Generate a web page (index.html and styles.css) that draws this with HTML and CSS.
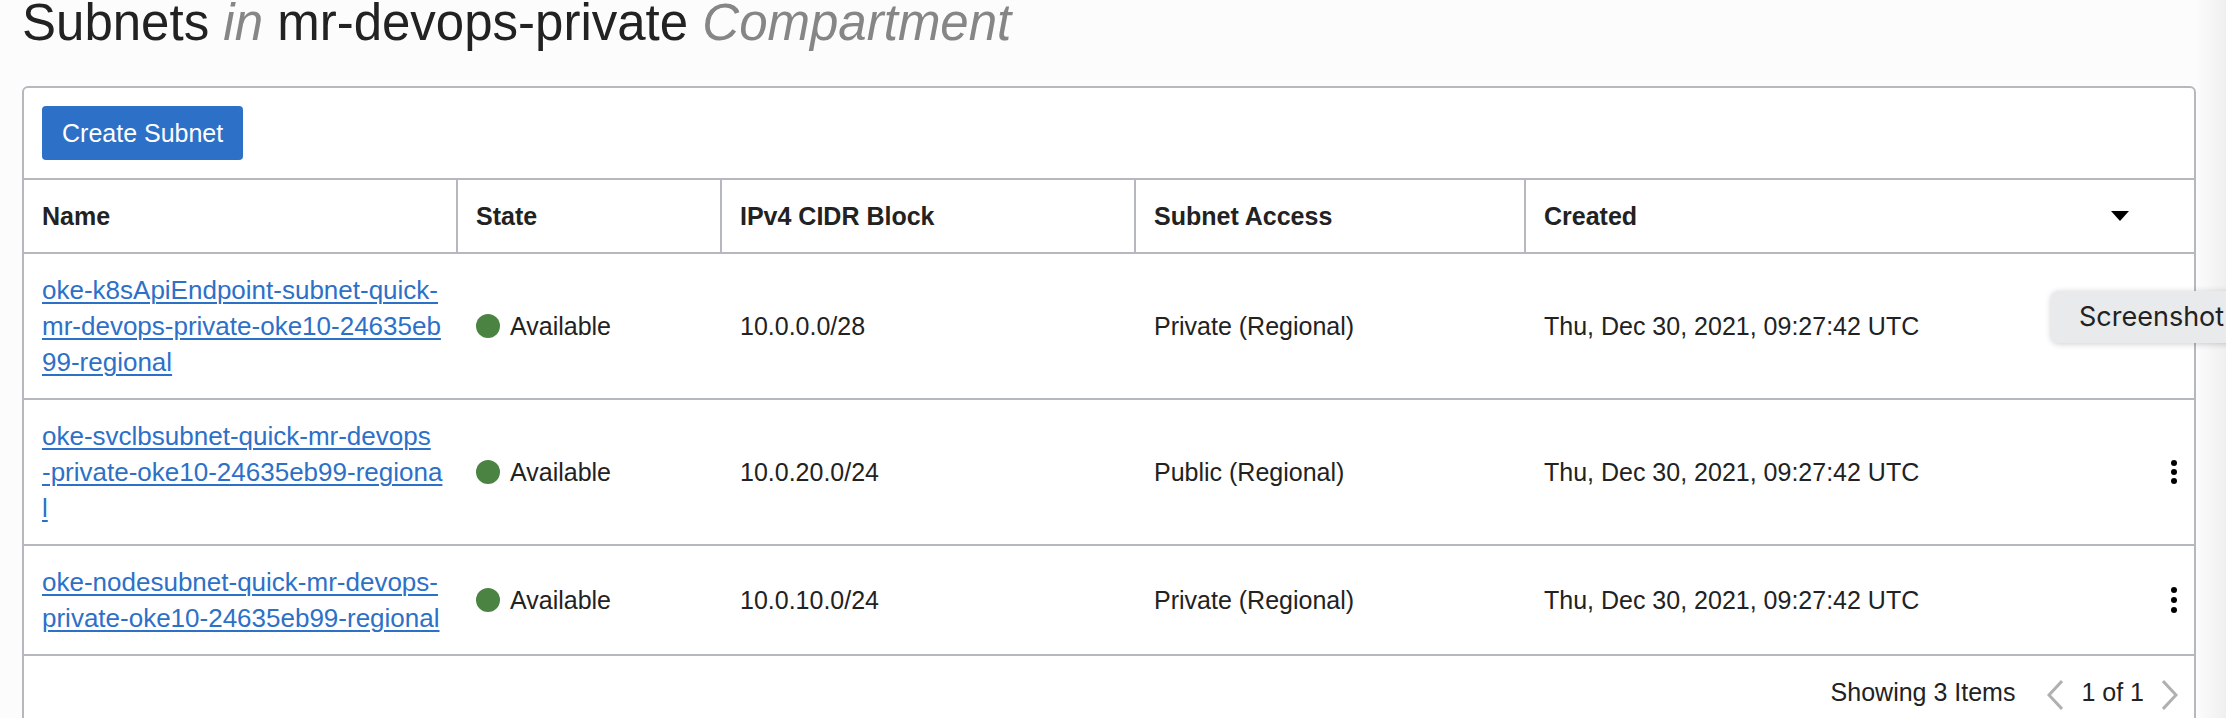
FILE: index.html
```html
<!DOCTYPE html>
<html lang="en">
<head>
<meta charset="utf-8">
<title>Subnets</title>
<link rel="stylesheet" href="styles.css">
</head>
<body>
<main class="page">
  <h1 class="title">Subnets <em>in</em> mr-devops-private <em>Compartment</em></h1>
  <section class="card">
    <div class="toolbar">
      <button class="primary" type="button">Create Subnet</button>
    </div>
    <table class="grid">
      <colgroup>
        <col class="col-name"><col class="col-state"><col class="col-cidr"><col class="col-access"><col><col class="col-actions">
      </colgroup>
      <thead>
        <tr>
          <th scope="col">Name</th>
          <th scope="col">State</th>
          <th scope="col">IPv4 CIDR Block</th>
          <th scope="col">Subnet Access</th>
          <th scope="col" aria-sort="descending"><span class="sortable">Created
            <svg class="caret" viewBox="0 0 18 10" aria-hidden="true"><path d="M0 0h18L9 10z"/></svg></span></th>
          <td></td>
        </tr>
      </thead>
      <tbody>
        <tr>
          <td><a href="#">oke-k8sApiEndpoint-subnet-quick-<br>mr-devops-private-oke10-24635eb<br>99-regional</a></td>
          <td><span class="state"><i class="dot"></i>Available</span></td>
          <td>10.0.0.0/28</td>
          <td>Private (Regional)</td>
          <td>Thu, Dec 30, 2021, 09:27:42 UTC</td>
          <td></td>
        </tr>
        <tr>
          <td><a href="#">oke-svclbsubnet-quick-mr-devops<br>-private-oke10-24635eb99-regiona<br>l</a></td>
          <td><span class="state"><i class="dot"></i>Available</span></td>
          <td>10.0.20.0/24</td>
          <td>Public (Regional)</td>
          <td>Thu, Dec 30, 2021, 09:27:42 UTC</td>
          <td class="actions"><button class="menu" type="button" aria-label="Actions"><svg viewBox="0 0 6 26" aria-hidden="true"><circle cx="3" cy="4" r="3"/><circle cx="3" cy="13" r="3"/><circle cx="3" cy="22" r="3"/></svg></button></td>
        </tr>
        <tr>
          <td><a href="#">oke-nodesubnet-quick-mr-devops-<br>private-oke10-24635eb99-regional</a></td>
          <td><span class="state"><i class="dot"></i>Available</span></td>
          <td>10.0.10.0/24</td>
          <td>Private (Regional)</td>
          <td>Thu, Dec 30, 2021, 09:27:42 UTC</td>
          <td class="actions"><button class="menu" type="button" aria-label="Actions"><svg viewBox="0 0 6 26" aria-hidden="true"><circle cx="3" cy="3" r="3"/><circle cx="3" cy="13" r="3"/><circle cx="3" cy="23" r="3"/></svg></button></td>
        </tr>
      </tbody>
    </table>
    <footer class="pager">
      <span class="count">Showing 3 Items</span>
      <button class="step" type="button" aria-label="Previous page" disabled><svg viewBox="0 0 16 30" aria-hidden="true"><path d="M15 1L2 15l13 14"/></svg></button>
      <span>1 of 1</span>
      <button class="step" type="button" aria-label="Next page" disabled><svg viewBox="0 0 16 30" aria-hidden="true"><path d="M1 1l13 14L1 29"/></svg></button>
    </footer>
  </section>
  <div class="edge"></div>
  <div class="tooltip" role="tooltip">Screenshot</div>
</main>
</body>
</html>
```
FILE: styles.css
```css
* {
  box-sizing: border-box;
}

body {
  margin: 0;
  background: #fcfcfc;
  color: #222;
  font-family: "Liberation Sans", Arial, sans-serif;
  font-size: 25px;
  line-height: 36px;
}

.page {
  position: relative;
  height: 100vh;
  overflow: hidden;
  padding: 0 30px 0 22px;
}

.title {
  margin: 0 0 40px;
  font-size: 51px;
  font-weight: 400;
  line-height: 46px;
}

.title em {
  color: #868686;
}

.card {
  background: #fff;
  border: 2px solid #b5b9bf;
  border-radius: 6px;
}

.toolbar {
  padding: 18px;
}

button {
  font: inherit;
  border: 0;
}

.primary {
  display: block;
  padding: 9px 20px;
  border-radius: 4px;
  background: #2d70c8;
  color: #fff;
}

.grid {
  width: 100%;
  table-layout: fixed;
  border-collapse: separate;
  border-spacing: 0;
  border-bottom: 2px solid #b5b9bf;
}

.col-name { width: 434px; }
.col-state { width: 264px; }
.col-cidr { width: 414px; }
.col-access { width: 390px; }
.col-actions { width: 47px; }

.grid th,
.grid td {
  padding: 18px;
  border-top: 2px solid #b5b9bf;
  text-align: left;
  vertical-align: middle;
  white-space: nowrap;
}

.grid th {
  border-right: 2px solid #b5b9bf;
}

.grid th:nth-child(5) {
  border-right: 0;
}

.grid td:first-child {
  font-size: 26px;
}

.sortable {
  display: flex;
  align-items: center;
  justify-content: space-between;
}

.caret {
  width: 18px;
  height: 10px;
}

a {
  color: #2d70c8;
  text-decoration-thickness: 2px;
  text-underline-offset: 3px;
}

.state {
  display: flex;
  align-items: center;
  gap: 10px;
}

.dot {
  width: 24px;
  height: 24px;
  border-radius: 50%;
  background: #4b8442;
}

.grid .actions {
  padding: 0;
}

.menu {
  display: flex;
  align-items: center;
  justify-content: center;
  width: 40px;
  height: 40px;
  margin-left: auto;
  padding: 0;
  background: none;
}

.menu svg {
  width: 6px;
  height: 26px;
}

.pager {
  display: flex;
  align-items: center;
  justify-content: flex-end;
  gap: 18px;
  padding: 18px 16px;
}

.count {
  margin-right: 14px;
}

.step {
  display: flex;
  padding: 6px 0 0;
  background: none;
}

.step svg {
  width: 16px;
  height: 30px;
  fill: none;
  stroke: #b0b0b0;
  stroke-width: 3px;
}

.edge {
  position: absolute;
  top: 0;
  right: 0;
  bottom: 0;
  width: 30px;
  background: linear-gradient(to right, rgba(0, 0, 0, 0), rgba(0, 0, 0, 0.05));
}

.tooltip {
  position: absolute;
  top: 291px;
  right: -30px;
  width: 205px;
  padding: 8px 28px;
  border-radius: 8px;
  background: #e9eaeb;
  box-shadow: 0 1px 6px rgba(0, 0, 0, 0.2);
  font-family: Inter, sans-serif;
  font-size: 27px;
}
```
